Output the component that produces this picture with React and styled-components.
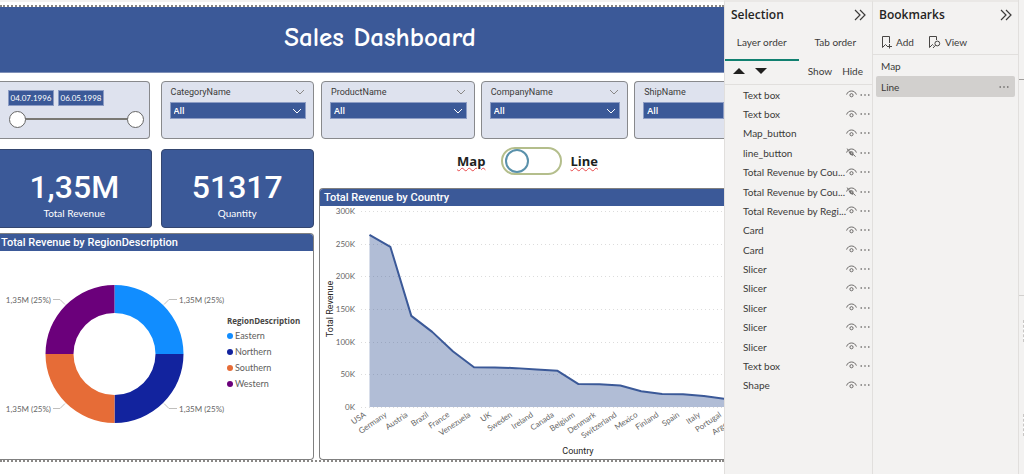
import React, { useState } from 'react';
import styled, { createGlobalStyle } from 'styled-components';

const GlobalStyle = createGlobalStyle`
    * {
        box-sizing: border-box;
    }
    body {
        margin: 0;
        font-family: "Segoe UI", "Lato", "Noto Sans", sans-serif;
        font-size: 10px;
        color: #3b3a39;
        background-color: #f3f2f1;
    }
    button, input, select {
        font-family: inherit;
        font-size: inherit;
        color: inherit;
    }
    ul {
        list-style: none;
        margin: 0;
        padding: 0;
    }
`;

const blue = '#3b5998';
const din = '"DIN", "Roboto", sans-serif';
const heading = '"Segoe UI", "Open Sans", sans-serif';

const Page = styled.div`
    display: flex;
    min-height: 100vh;
    overflow: hidden;
`;

/* ---------- report canvas ---------- */

const Canvas = styled.main`
    flex: 1;
    min-width: 0;
    padding-top: 3px;
    background-color: white;
    border-top: 2px solid #f3f2f1;
    overflow: hidden;
`;

const Report = styled.div`
    border-top: 2px dotted #8a8886;
    border-bottom: 2px dotted #8a8886;
`;

const Header = styled.header`
    height: 66px;
    display: flex;
    align-items: center;
    justify-content: center;
    padding: 0 0 4px 36px;
    background-color: ${blue};
    border-bottom: 1px solid #7f90b8;
`;

const Title = styled.h1`
    margin: 0;
    font-family: "Comic Sans MS", "Comic Neue", "Lato", sans-serif;
    font-size: 27px;
    line-height: 32px;
    font-weight: 700;
    color: white;
`;

const Columns = styled.div`
    display: grid;
    grid-template-columns: 314fr 405fr;
    gap: 5px;
    padding-top: 8px;
`;

const Column = styled.div`
    display: flex;
    flex-direction: column;
    min-width: 0;
`;

const SlicerRow = styled.div`
    display: flex;
    gap: ${props => props.gap};
    padding-left: ${props => props.inset || '0'};
`;

const SlicerBox = styled.div`
    flex: ${props => props.grow} 1 0;
    min-width: 0;
    height: 58px;
    padding: ${props => (props.edge === 'left' ? '8px 5px 0 8px' : '4px 7px 0 8px')};
    background-color: #dee2ee;
    border: 1px solid #88898c;
    border-radius: 4px;
    ${props => props.edge === 'left' && 'border-left: none; border-radius: 0 4px 4px 0;'}
    ${props => props.edge === 'right' && 'border-right: none; border-radius: 4px 0 0 4px; padding-right: 0;'}
`;

const SlicerHead = styled.div`
    display: flex;
    align-items: center;
    justify-content: space-between;
    height: 16px;
    padding: 0 1px 4px;
    font-family: ${din};
    font-size: 9px;
`;

const SelectWrap = styled.div`
    display: grid;
    align-items: center;
    height: 17px;
    color: white;
    background-color: ${blue};
    border: 1px solid #8c9cc4;

    > * {
        grid-area: 1 / 1;
    }
    svg {
        justify-self: end;
        margin-right: 3px;
        pointer-events: none;
    }
`;

const Select = styled.select`
    appearance: none;
    width: 100%;
    padding: 0 3px;
    border: none;
    background: none;
    font-family: ${heading};
    font-size: 9px;
    font-weight: 600;
    line-height: 14px;
`;

const Dates = styled.div`
    display: flex;
    gap: 4px;
`;

const DateInput = styled.input`
    width: 46px;
    height: 16px;
    padding: 0;
    border: 1px solid #8c9cc4;
    background-color: ${blue};
    color: white;
    font-size: 8px;
    text-align: center;
`;

const Range = styled.div`
    display: grid;
    align-items: center;
    height: 18px;
    margin: 4px 0 0 1px;
    background: linear-gradient(#7a7974, #7a7974) center / calc(100% - 16px) 2px no-repeat;
`;

const Thumb = styled.input`
    grid-area: 1 / 1;
    appearance: none;
    width: 100%;
    margin: 0;
    background: none;
    pointer-events: none;

    &::-webkit-slider-thumb {
        appearance: none;
        width: 17px;
        height: 17px;
        border: 1px solid #666;
        border-radius: 50%;
        background-color: white;
        pointer-events: auto;
        cursor: pointer;
    }
`;

const CardRow = styled.div`
    display: flex;
    gap: 9px;
    padding: 10px 0 5px;
`;

const Card = styled.div`
    flex: ${props => props.grow} 1 0;
    height: 79px;
    padding-top: 18px;
    display: flex;
    flex-direction: column;
    align-items: center;
    color: white;
    background-color: ${blue};
    border: 1px solid #34466f;
    border-radius: ${props => (props.edge ? '0 4px 4px 0' : '4px')};
    ${props => props.edge && 'border-left: none; padding-right: 2px;'}
`;

const CardValue = styled.div`
    font-family: ${din};
    font-size: 32px;
    line-height: 38px;
    font-weight: 500;
`;

const CardLabel = styled.div`
    line-height: 14px;
`;

const Visual = styled.section`
    flex: 1;
    display: flex;
    flex-direction: column;
    border: 1px solid #808080;
    border-radius: 4px;
    overflow: hidden;
    ${props => props.edge === 'left' && 'border-left: none; border-radius: 0 4px 4px 0;'}
    ${props => props.edge === 'right' && 'border-right: none; border-radius: 4px 0 0 4px;'}
`;

const VisualTitle = styled.h2`
    margin: 0;
    height: 17px;
    padding: 0 ${props => props.pad};
    font-family: ${din};
    font-size: 11px;
    line-height: 18px;
    font-weight: 500;
    color: white;
    background-color: ${blue};
`;

const DonutBody = styled.div`
    display: flex;
    height: 208px;
`;

const DonutSvg = styled.svg`
    flex: none;
    width: 227px;
    height: 208px;
    font-size: 8px;
`;

const Legend = styled.div`
    padding-top: 63px;
    font-size: 9px;
    line-height: 16px;
    color: #605e5c;
`;

const LegendTitle = styled.div`
    font-family: ${heading};
    font-size: 8px;
    font-weight: 700;
    line-height: 14px;
    color: #484644;
`;

const LegendItem = styled.li`
    display: flex;
    align-items: center;
    gap: 2px;

    &::before {
        content: "";
        width: 6px;
        height: 6px;
        border-radius: 50%;
        background-color: ${props => props.color};
    }
`;

const ToggleRow = styled.div`
    display: flex;
    align-items: center;
    justify-content: center;
    gap: 8px;
    height: 49px;
    padding: 0 0 5px 4px;
    color: #201f1e;
`;

const ToggleLabel = styled.label`
    padding: 0 8px;
    font-family: ${heading};
    font-size: 13px;
    line-height: 18px;
    font-weight: 700;
    text-decoration: underline wavy #e8484a 1px;
    ${props => props.end && 'padding: 0;'}
`;

const Switch = styled.input`
    appearance: none;
    width: 61px;
    height: 28px;
    margin: 0;
    padding: 2px;
    display: flex;
    align-items: center;
    justify-content: ${props => (props.checked ? 'flex-end' : 'flex-start')};
    border: 2px solid #b4be8c;
    border-radius: 14px;
    background-color: white;
    cursor: pointer;

    &::before {
        content: "";
        width: 20px;
        height: 20px;
        border: 2px solid #5a91ab;
        border-radius: 50%;
    }
`;

const AreaSvg = styled.svg`
    width: 100%;
    height: 253px;
    font-size: 8px;
`;

/* ---------- side panes ---------- */

const Pane = styled.aside`
    flex: none;
    width: ${props => props.width};
    border-top: 2px solid #eae8e6;
    border-left: 1px solid #e1dfdd;
    background-color: #f3f2f1;
`;

const PaneHead = styled.div`
    display: flex;
    align-items: center;
    justify-content: space-between;
    height: 26px;
    padding: 0 6px;
`;

const PaneTitle = styled.h2`
    margin: 0;
    font-family: ${heading};
    font-size: 12px;
    line-height: 18px;
    font-weight: 600;
    color: #252423;
`;

const Button = styled.button`
    display: flex;
    align-items: center;
    gap: 4px;
    margin: 0;
    padding: 0;
    border: none;
    background: none;
    line-height: 14px;
    cursor: pointer;
`;

const Tabs = styled.div`
    display: flex;
    height: 33px;
`;

const Tab = styled(Button)`
    flex: 1;
    justify-content: center;
    padding-bottom: ${props => (props.active ? '4px' : '6px')};
    border-bottom: ${props => (props.active ? '2px solid #118070' : 'none')};
`;

const Tools = styled.div`
    display: flex;
    align-items: center;
    gap: 10px;
    height: 24px;
    padding: 0 9px 3px 8px;
    border-bottom: 1px solid #e1dfdd;

    > :nth-child(3) {
        margin-left: auto;
    }
`;

const LayerList = styled.ul`
    display: grid;
    grid-template-columns: minmax(0, 1fr);
    grid-auto-rows: 1fr;
    height: 310px;
`;

const Layer = styled.li`
    display: flex;
    align-items: center;
    gap: 3px;
    padding: 0 2px 0 18px;
`;

const LayerName = styled.span`
    flex: 1;
    min-width: 0;
    white-space: nowrap;
    line-height: 14px;
`;

const BookmarkTools = styled.div`
    display: flex;
    align-items: center;
    gap: 14px;
    height: 27px;
    padding: 1px 8px 0;
    border-bottom: 1px solid #e1dfdd;
`;

const BookmarkList = styled.ul`
    padding: 0 3px;
`;

const Bookmark = styled.li`
    display: flex;
    align-items: center;
    justify-content: space-between;
    height: 21px;
    padding: 0 6px 0 5px;
    border-radius: 2px;
    background-color: ${props => (props.active ? '#d2d0ce' : 'transparent')};
`;

const Rail = styled.aside`
    flex: none;
    width: 6px;
    border-left: 1px solid #e1dfdd;
    background-color: #f3f2f1;
`;

const RailSection = styled.div`
    height: ${props => props.size};
    border-bottom: 1px solid ${props => props.line};
`;

const DropZone = styled.div`
    height: 22px;
    margin: ${props => props.top} 0 0 4px;
    border: 1px dashed #c8c6c4;
    border-right: none;
    background-color: white;
`;

/* ---------- icons ---------- */

const Chevron = ({ color }) => (
    <svg width="10" height="6" viewBox="0 0 10 6" fill="none" stroke={color}>
        <path d="M1 1L5 5L9 1" />
    </svg>
);

const DoubleChevron = () => (
    <svg width="12" height="12" viewBox="0 0 12 12" fill="none" stroke="#3b3a39" strokeWidth="1.2">
        <path d="M1 1L6 6L1 11M6 1L11 6L6 11" />
    </svg>
);

const Eye = ({ hidden }) => (
    <svg width="11" height="9" viewBox="0 0 11 9" fill="none" stroke="#605e5c" strokeWidth="0.9">
        <path d="M0.6 4.6C1.4 2.2 3.2 1 5.5 1S9.6 2.2 10.4 4.6" />
        <circle cx="5.5" cy="5.2" r="1.6" />
        {hidden && <path d="M0.8 0.6L9.6 8.6M2.6 3.8L7 7.6" />}
    </svg>
);

const Dots = () => (
    <svg width="10" height="2" viewBox="0 0 10 2" fill="#484644">
        <circle cx="1.2" cy="1" r="0.75" />
        <circle cx="5" cy="1" r="0.75" />
        <circle cx="8.8" cy="1" r="0.75" />
    </svg>
);

const AddIcon = () => (
    <svg width="11" height="14" viewBox="0 0 11 14" fill="none" stroke="#484644">
        <path d="M8.5 8V1.5H1.5V12.5L4.5 9.5L6 11" />
        <path d="M8.5 9V13.5M6 11.5H11" />
    </svg>
);

const ViewIcon = () => (
    <svg width="13" height="14" viewBox="0 0 13 14" fill="none" stroke="#484644">
        <path d="M8.5 5V1.5H1.5V12.5L4.5 9.5L5.5 10.5" />
        <circle cx="9.3" cy="8.5" r="2.4" />
        <path d="M7.6 10.2L5 13" />
    </svg>
);

const Arrow = ({ down }) => (
    <svg width="12" height="6" viewBox="0 0 12 6" fill="#201f1e">
        <path d={down ? 'M0 0H12L6 6Z' : 'M0 6H12L6 0Z'} />
    </svg>
);

/* ---------- data ---------- */

const regions = [
    { name: 'Eastern', color: '#118dff' },
    { name: 'Northern', color: '#12239e' },
    { name: 'Southern', color: '#e66c37' },
    { name: 'Western', color: '#6b007b' },
];

const revenue = [
    ['USA', 263.5], ['Germany', 245], ['Austria', 139.5], ['Brazil', 115], ['France', 85],
    ['Venezuela', 60.8], ['UK', 60.6], ['Sweden', 59.5], ['Ireland', 57.3], ['Canada', 55.3],
    ['Belgium', 35.1], ['Denmark', 34.8], ['Switzerland', 32.9], ['Mexico', 24], ['Finland', 19.8],
    ['Spain', 19.4], ['Italy', 16.7], ['Portugal', 12.4], ['Argentina', 8],
];

const layers = [
    'Text box', 'Text box', 'Map_button', 'line_button', 'Total Revenue by Cou...',
    'Total Revenue by Cou...', 'Total Revenue by Regi...', 'Card', 'Card', 'Slicer', 'Slicer',
    'Slicer', 'Slicer', 'Slicer', 'Text box', 'Shape',
];
const hiddenLayers = [3, 5];

/* ---------- visuals ---------- */

const Slicer = ({ name, grow, edge }) => (
    <SlicerBox grow={grow} edge={edge}>
        <SlicerHead>
            <label htmlFor={name}>{name}</label>
            {edge !== 'right' && <Chevron color="#8a8886" />}
        </SlicerHead>
        <SelectWrap>
            <Select id={name}>
                <option>All</option>
            </Select>
            {edge !== 'right' && <Chevron color="white" />}
        </SelectWrap>
    </SlicerBox>
);

const DateSlicer = () => {
    const [from, setFrom] = useState(0);
    const [to, setTo] = useState(100);

    return (
        <SlicerBox grow={151} edge="left">
            <Dates>
                <DateInput aria-label="Start date" defaultValue="04.07.1996" />
                <DateInput aria-label="End date" defaultValue="06.05.1998" />
            </Dates>
            <Range>
                <Thumb type="range" aria-label="Range start" value={from} onChange={(e) => setFrom(Math.min(+e.target.value, to))} />
                <Thumb type="range" aria-label="Range end" value={to} onChange={(e) => setTo(Math.max(+e.target.value, from))} />
            </Range>
        </SlicerBox>
    );
};

const Donut = () => (
    <DonutSvg viewBox="0 0 227 208">
        <path d="M114.5 34A69 69 0 0 1 183.5 103H155.5A41 41 0 0 0 114.5 62Z" fill={regions[0].color} />
        <path d="M183.5 103A69 69 0 0 1 114.5 172V144A41 41 0 0 0 155.5 103Z" fill={regions[1].color} />
        <path d="M114.5 172A69 69 0 0 1 45.5 103H73.5A41 41 0 0 0 114.5 144Z" fill={regions[2].color} />
        <path d="M45.5 103A69 69 0 0 1 114.5 34V62A41 41 0 0 0 73.5 103Z" fill={regions[3].color} />
        <g fill="none" stroke="#c0bfbd">
            <path d="M53 48.5H60L65 53.5M177 48.5H169L164 53.5" />
            <path d="M53 157.5H60L65 152.5M177 157.5H169L164 152.5" />
        </g>
        <g fill="#666">
            <text x="51" y="52" textAnchor="end">1,35M (25%)</text>
            <text x="179" y="52">1,35M (25%)</text>
            <text x="51" y="161" textAnchor="end">1,35M (25%)</text>
            <text x="179" y="161">1,35M (25%)</text>
        </g>
    </DonutSvg>
);

const AreaChart = () => {
    const px = (i) => 49.5 + i * 20.9;
    const py = (value) => 201 - (value / 300) * 196;
    const line = revenue.map(([, value], i) => `${px(i)},${py(value)}`).join(' ');

    return (
        <AreaSvg viewBox="0 0 404 253" preserveAspectRatio="xMinYMin slice">
            {[300, 250, 200, 150, 100, 50, 0].map((tick) => (
                <g key={tick}>
                    <path d={`M41 ${Math.round(py(tick)) + 0.5}H420`} stroke="#dcdcdc" strokeDasharray="1 3" />
                    <text x="35" y={py(tick) + 3} textAnchor="end" fill="#666">{tick}K</text>
                </g>
            ))}
            <polygon points={`${px(0)},201 ${line} ${px(18)},201`} fill={blue} fillOpacity="0.4" />
            <polyline points={line} fill="none" stroke={blue} strokeWidth="2" strokeLinejoin="round" />
            {revenue.map(([country], i) => (
                <text
                    key={country}
                    textAnchor="end"
                    fill="#666"
                    transform={`translate(${px(i) - 3} 210) rotate(-34)`}
                >
                    {country}
                </text>
            ))}
            <g fontFamily="Roboto, sans-serif" fill="#252423" textAnchor="middle" fontSize="9">
                <text transform="translate(13 103) rotate(-90)">Total Revenue</text>
                <text x="258" y="248">Country</text>
            </g>
        </AreaSvg>
    );
};

const SelectionPane = () => {
    const [tab, setTab] = useState('Layer order');

    return (
        <Pane width="148px">
            <PaneHead>
                <PaneTitle>Selection</PaneTitle>
                <Button aria-label="Collapse selection"><DoubleChevron /></Button>
            </PaneHead>
            <Tabs>
                {['Layer order', 'Tab order'].map((name) => (
                    <Tab key={name} active={tab === name} onClick={() => setTab(name)}>{name}</Tab>
                ))}
            </Tabs>
            <Tools>
                <Button aria-label="Move up"><Arrow /></Button>
                <Button aria-label="Move down"><Arrow down /></Button>
                <Button>Show</Button>
                <Button>Hide</Button>
            </Tools>
            <LayerList>
                {layers.map((name, i) => (
                    <Layer key={i}>
                        <LayerName>{name}</LayerName>
                        <Button aria-label="Toggle visibility"><Eye hidden={hiddenLayers.includes(i)} /></Button>
                        <Button aria-label="More options"><Dots /></Button>
                    </Layer>
                ))}
            </LayerList>
        </Pane>
    );
};

const BookmarksPane = ({ active, onSelect }) => (
    <Pane width="146px">
        <PaneHead>
            <PaneTitle>Bookmarks</PaneTitle>
            <Button aria-label="Collapse bookmarks"><DoubleChevron /></Button>
        </PaneHead>
        <BookmarkTools>
            <Button><AddIcon />Add</Button>
            <Button><ViewIcon />View</Button>
        </BookmarkTools>
        <BookmarkList>
            {['Map', 'Line'].map((name) => (
                <Bookmark key={name} active={active === name}>
                    <Button onClick={() => onSelect(name)}>{name}</Button>
                    {active === name && <Button aria-label="More options"><Dots /></Button>}
                </Bookmark>
            ))}
        </BookmarkList>
    </Pane>
);

const App = () => {
    const [bookmark, setBookmark] = useState('Line');
    const [switched, setSwitched] = useState(false);

    return (
        <Page>
            <GlobalStyle />
            <Canvas>
                <Report>
                    <Header>
                        <Title>Sales Dashboard</Title>
                    </Header>
                    <Columns>
                        <Column>
                            <SlicerRow gap="11px">
                                <DateSlicer />
                                <Slicer name="CategoryName" grow={152} />
                            </SlicerRow>
                            <CardRow>
                                <Card grow={151} edge>
                                    <CardValue>1,35M</CardValue>
                                    <CardLabel>Total Revenue</CardLabel>
                                </Card>
                                <Card grow={154}>
                                    <CardValue>51317</CardValue>
                                    <CardLabel>Quantity</CardLabel>
                                </Card>
                            </CardRow>
                            <Visual edge="left">
                                <VisualTitle pad="1px">Total Revenue by RegionDescription</VisualTitle>
                                <DonutBody>
                                    <Donut />
                                    <Legend>
                                        <LegendTitle>RegionDescription</LegendTitle>
                                        <ul>
                                            {regions.map((r) => (
                                                <LegendItem key={r.name} color={r.color}>{r.name}</LegendItem>
                                            ))}
                                        </ul>
                                    </Legend>
                                </DonutBody>
                            </Visual>
                        </Column>
                        <Column>
                            <SlicerRow gap="6px" inset="2px">
                                <Slicer name="ProductName" grow={154} />
                                <Slicer name="CompanyName" grow={147} />
                                <Slicer name="ShipName" grow={91} edge="right" />
                            </SlicerRow>
                            <ToggleRow>
                                <ToggleLabel htmlFor="view">Map</ToggleLabel>
                                <Switch
                                    id="view"
                                    type="checkbox"
                                    role="switch"
                                    checked={switched}
                                    onChange={(e) => setSwitched(e.target.checked)}
                                />
                                <ToggleLabel htmlFor="view" end>Line</ToggleLabel>
                            </ToggleRow>
                            <Visual edge="right">
                                <VisualTitle pad="4px">Total Revenue by Country</VisualTitle>
                                <AreaChart />
                            </Visual>
                        </Column>
                    </Columns>
                </Report>
            </Canvas>
            <SelectionPane />
            <BookmarksPane active={bookmark} onSelect={setBookmark} />
            <Rail>
                <RailSection size="80px" line="#a19f9d" />
                <RailSection size="216px" line="#d2d0ce" />
                <DropZone top="24px" />
                <DropZone top="72px" />
            </Rail>
        </Page>
    );
};

export default App;
